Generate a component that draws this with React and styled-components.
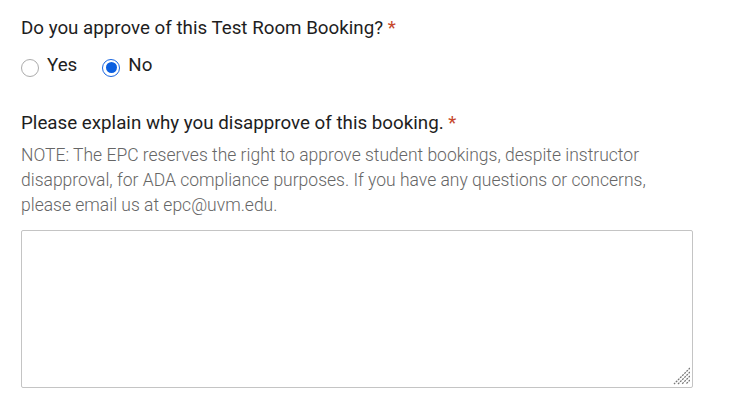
import styled, { createGlobalStyle } from 'styled-components';

const GlobalStyle = createGlobalStyle`
  body {
    margin: 0;
    background: #ffffff;
    font-family: Roboto, "Noto Sans", sans-serif;
    color: #202020;
  }
`;

export default function App() {
  return (
    <>
      <GlobalStyle />
      <Page>
        <Label>
          Do you approve of this Test Room Booking? <Req>*</Req>
        </Label>
        <RadioRow>
          <Option>
            <Radio />
            Yes
          </Option>
          <Option>
            <Radio checked />
            No
          </Option>
        </RadioRow>

        <Label $top={33}>
          Please explain why you disapprove of this booking. <Req>*</Req>
        </Label>
        <Note>
          NOTE: The EPC reserves the right to approve student bookings, despite instructor
          <br />
          disapproval, for ADA compliance purposes. If you have any questions or concerns,
          <br />
          please email us at epc@uvm.edu.
        </Note>
        <TextWrap>
          <TextBox />
          <Grip width="20" height="20" viewBox="0 0 20 20">
            <line x1="20" y1="3" x2="4" y2="19" />
            <line x1="20" y1="7" x2="8" y2="19" />
            <line x1="20" y1="11" x2="12" y2="19" />
            <line x1="20" y1="15" x2="16" y2="19" />
          </Grip>
        </TextWrap>
      </Page>
    </>
  );
}

function Radio({ checked }) {
  return <RadioCircle $checked={checked}>{checked && <RadioDot />}</RadioCircle>;
}

const Page = styled.div`
  padding: 16px 21px;
  display: flex;
  flex-direction: column;
  align-items: flex-start;
`;

const Label = styled.div`
  margin-top: ${({ $top }) => $top || 0}px;
  font-size: 18.75px;
  line-height: 25px;
  color: #1e1e1e;
`;

const Req = styled.span`
  color: #c6472b;
`;

const RadioRow = styled.div`
  display: flex;
  gap: 25px;
  margin-top: 12px;
`;

const Option = styled.label`
  display: flex;
  align-items: center;
  gap: 8px;
  font-size: 18.75px;
  line-height: 25px;
  color: #1e1e1e;
`;

const RadioCircle = styled.span`
  width: 18px;
  height: 18px;
  margin-top: 4px;
  border-radius: 50%;
  box-sizing: border-box;
  border: 1px solid ${({ $checked }) => ($checked ? '#1a66e0' : '#acacac')};
  display: flex;
  align-items: center;
  justify-content: center;
  background: #fff;
`;

const RadioDot = styled.span`
  width: 11px;
  height: 11px;
  border-radius: 50%;
  background: #0b5fe0;
`;

const Note = styled.div`
  margin-top: 7px;
  font-size: 17.5px;
  font-weight: 300;
  line-height: 25px;
  color: #666666;
  white-space: nowrap;
`;

const TextWrap = styled.div`
  position: relative;
  margin-top: 12px;
  width: 672px;
  height: 158px;
`;

const TextBox = styled.textarea`
  display: block;
  width: 100%;
  height: 100%;
  margin: 0;
  box-sizing: border-box;
  border: 1px solid #c4c4c4;
  border-radius: 2px;
  resize: none;
  font-family: Roboto, sans-serif;
  font-size: 17.5px;
`;

const Grip = styled.svg`
  position: absolute;
  right: 3px;
  bottom: 3px;
  pointer-events: none;

  line {
    stroke: #777777;
    stroke-width: 1.3;
    stroke-dasharray: 2 1;
  }
`;
